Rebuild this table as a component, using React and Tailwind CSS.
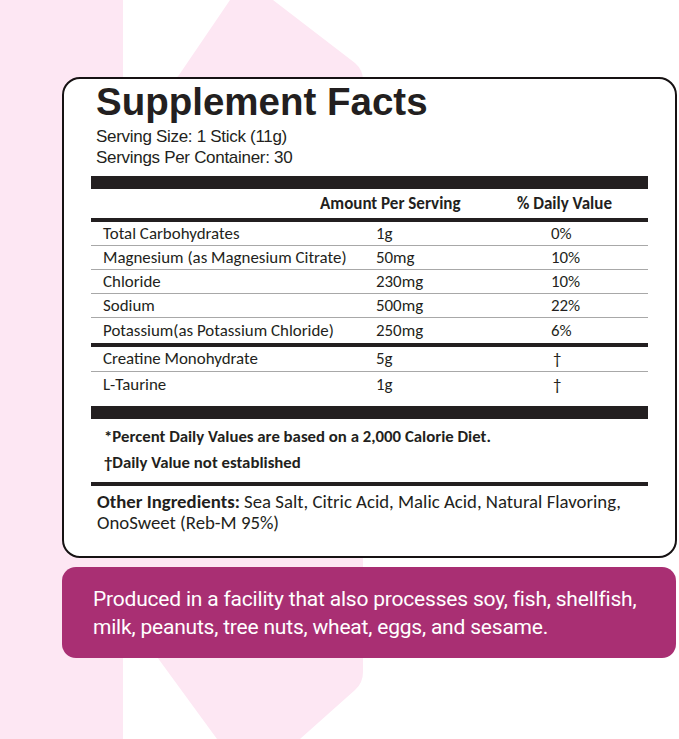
import React from "react";

const rows = [
  ["Total Carbohydrates", "1g", "0%"],
  ["Magnesium (as Magnesium Citrate)", "50mg", "10%"],
  ["Chloride", "230mg", "10%"],
  ["Sodium", "500mg", "22%"],
  ["Potassium(as Potassium Chloride)", "250mg", "6%"],
];

const calib = { fontFamily: '"Carlito", "Lato", "Open Sans", sans-serif' };

function Background() {
  return (
    <svg className="absolute inset-0" width="679" height="739" viewBox="0 0 679 739">
      <rect x="0" y="0" width="123" height="739" fill="#fde7f3" />
      <path
        d="M230 0 L273 0 L355 63 Q363 70 363 80 L363 672 Q363 683 355 690 L300 739 L217 739 L160 661 L110 590 L110 150 L179 75 Z"
        fill="#fde7f3"
      />
    </svg>
  );
}

export default function App() {
  return (
    <div className="relative w-[679px] h-[739px] overflow-hidden bg-white">
      <Background />
      <div className="relative flex flex-col">
        <div className="mt-[77px] ml-[62px] w-[615px] h-[481px] border-2 border-[#161213] rounded-[18px] bg-white px-[27px] flex flex-col">
          <div
            className="pt-[4px] pl-[5px] text-[38.5px] leading-[38px] font-bold text-[#231f20]"
            style={{ fontFamily: '"Liberation Sans", Arial, sans-serif' }}
          >
            Supplement Facts
          </div>
          <div
            className="mt-[5px] pl-[5px] text-[17px] leading-[21px] text-[#231f20] tracking-[-0.3px]"
            style={{ fontFamily: '"Liberation Sans", Arial, sans-serif' }}
          >
            <div>Serving Size: 1 Stick (11g)</div>
            <div>Servings Per Container: 30</div>
          </div>
          <div className="mt-[8px] h-[13px] bg-[#231f20]" />
          <div className="text-[#231f20]" style={calib}>
            <div className="h-[29px] flex items-center text-[17px] font-semibold">
              <div className="w-[229px]" />
              <div className="w-[197px] whitespace-nowrap">Amount Per Serving</div>
              <div className="whitespace-nowrap">% Daily Value</div>
            </div>
            <div className="h-[4px] bg-[#231f20]" />
            {rows.map((r, i) => (
              <div
                key={r[0]}
                className={`flex items-center text-[16.9px] ${i < rows.length - 1 ? "h-[24px] border-b border-[#a8a8a8]" : "h-[25px]"}`}
              >
                <div className="w-[285px] pl-[12px] whitespace-nowrap">{r[0]}</div>
                <div className="w-[175px]">{r[1]}</div>
                <div>{r[2]}</div>
              </div>
            ))}
            <div className="h-[4px] bg-[#231f20]" />
            <div className="h-[25px] flex items-center text-[16.9px] border-b border-[#a8a8a8]">
              <div className="w-[285px] pl-[12px]">Creatine Monohydrate</div>
              <div className="w-[177px]">5g</div>
              <div>†</div>
            </div>
            <div className="h-[25px] flex items-center text-[16.9px]">
              <div className="w-[285px] pl-[12px]">L-Taurine</div>
              <div className="w-[177px]">1g</div>
              <div>†</div>
            </div>
            <div className="mt-[9px] h-[13px] bg-[#231f20]" />
            <div className="pl-[13px] pt-[5px] text-[16.8px] font-bold leading-[26px] whitespace-nowrap">
              <div>*Percent Daily Values are based on a 2,000 Calorie Diet.</div>
              <div>†Daily Value not established</div>
            </div>
            <div className="mt-[6px] h-[4px] bg-[#231f20]" />
            <div className="pl-[6px] pt-[5px] text-[18.8px] leading-[21px] whitespace-nowrap">
              <span className="font-bold">Other Ingredients:</span> Sea Salt, Citric Acid, Malic Acid, Natural Flavoring,
              <br />
              OnoSweet (Reb-M 95%)
            </div>
          </div>
        </div>
        <div className="mt-[9px] ml-[62px] w-[614px] h-[91px] rounded-[14px] bg-[#a92f73] flex items-center pl-[31px]">
          <div
            className="text-white text-[21px] leading-[28px] tracking-[-0.2px] whitespace-nowrap"
            style={{ fontFamily: 'Roboto, "Noto Sans", sans-serif' }}
          >
            Produced in a facility that also processes soy, fish, shellfish,
            <br />
            milk, peanuts, tree nuts, wheat, eggs, and sesame.
          </div>
        </div>
      </div>
    </div>
  );
}
